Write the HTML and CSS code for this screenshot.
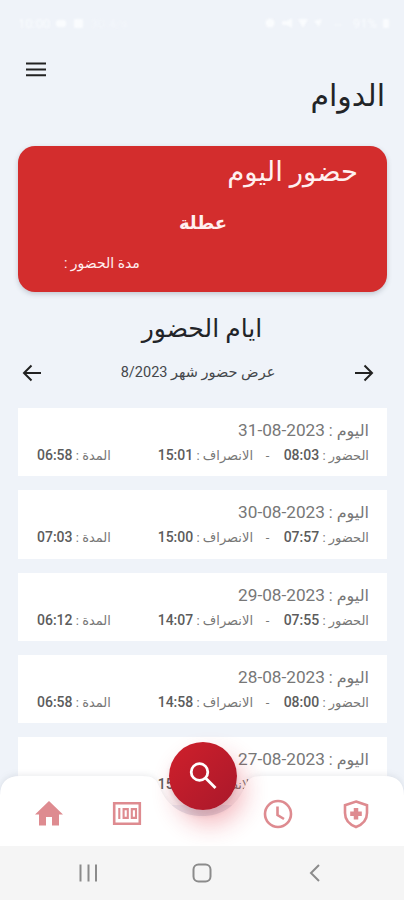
FILE: index.html
```html
<!DOCTYPE html>
<html lang="ar" dir="rtl">
<head>
    <meta charset="UTF-8">
    <meta name="viewport" content="width=device-width, initial-scale=1.0">
    <title>الدوام</title>
    <link rel="stylesheet" href="styles.css">
</head>
<body>
    <div class="app">
        <div class="status" dir="ltr">
            <div class="status-group">
                <span>10:00</span>
                <svg width="30" height="10" viewBox="0 0 30 10"><rect x="1" y="2" width="10" height="7" rx="2"/><rect x="19" y="1" width="9" height="9" rx="1"/></svg>
                <span class="dim">30.4/s</span>
            </div>
            <div class="status-group">
                <svg width="84" height="10" viewBox="0 0 84 10"><circle cx="6" cy="5" r="4.5"/><path d="M18 3h5l5-3v10l-5-3h-5zM34 1h10l-5 9zM50 3l8-2-3 8z"/><path d="M70 6h8v2h-8z" opacity=".4"/></svg>
                <span>91%</span>
                <svg width="9" height="10" viewBox="0 0 9 10"><rect x="1" y="1" width="6" height="9" rx="1"/></svg>
            </div>
        </div>

        <header class="header">
            <h1>الدوام</h1>
            <svg class="menu" width="22" height="16" viewBox="0 0 22 16"><path d="M1 2.500h20M1 8.500h20M1 14.200h20"/></svg>
        </header>

        <section class="today">
            <h2>حضور اليوم</h2>
            <strong>عطلة</strong>
            <p>مدة الحضور :</p>
        </section>

        <h2 class="days-title">ايام الحضور</h2>
        <div class="month">
            <svg width="20" height="18" viewBox="0 0 20 18"><path d="M1 9h17M10.500 1.500L18 9l-7.500 7.500"/></svg>
            <span>عرض حضور شهر 8/2023</span>
            <svg width="20" height="18" viewBox="0 0 20 18"><path d="M19 9H2M9.500 1.500L2 9l7.500 7.500"/></svg>
        </div>

        <main class="list">
            <div class="day">
                <div class="date">اليوم : <bdi dir="ltr">31-08-2023</bdi></div>
                <div class="times">
                    <span class="in">الحضور : <b>08:03</b></span><span class="dash">-</span><span class="out">الانصراف : <b>15:01</b></span><span class="total">المدة : <b>06:58</b></span>
                </div>
            </div>
            <div class="day">
                <div class="date">اليوم : <bdi dir="ltr">30-08-2023</bdi></div>
                <div class="times">
                    <span class="in">الحضور : <b>07:57</b></span><span class="dash">-</span><span class="out">الانصراف : <b>15:00</b></span><span class="total">المدة : <b>07:03</b></span>
                </div>
            </div>
            <div class="day">
                <div class="date">اليوم : <bdi dir="ltr">29-08-2023</bdi></div>
                <div class="times">
                    <span class="in">الحضور : <b>07:55</b></span><span class="dash">-</span><span class="out">الانصراف : <b>14:07</b></span><span class="total">المدة : <b>06:12</b></span>
                </div>
            </div>
            <div class="day">
                <div class="date">اليوم : <bdi dir="ltr">28-08-2023</bdi></div>
                <div class="times">
                    <span class="in">الحضور : <b>08:00</b></span><span class="dash">-</span><span class="out">الانصراف : <b>14:58</b></span><span class="total">المدة : <b>06:58</b></span>
                </div>
            </div>
            <div class="day">
                <div class="date">اليوم : <bdi dir="ltr">27-08-2023</bdi></div>
                <div class="times">
                    <span class="in"></span><span class="dash"></span><span class="out">الانصراف : <b>15:00</b></span>
                </div>
            </div>
        </main>

        <nav class="tabs" dir="ltr">
            <svg class="tabs-bg" width="404" height="70" viewBox="0 0 404 70"><path d="M0 70V20Q0 0 20 0H142C153 0 156 3 159 10C167 30 182 40 202 40S237 30 245 10C248 3 251 0 262 0H384Q404 0 404 20V70z"/></svg>
            <svg class="tab" width="30" height="30" viewBox="0 0 30 30"><path class="fill" d="M15 2L1 15.500H5V26.500h7V18h6v8.500h7V15.500h4z"/></svg>
            <svg class="tab" width="30" height="30" viewBox="0 0 30 30"><path d="M2.200 4.200h25.600v20.600H2.200z"/><path class="thin" d="M7.300 9v11M11.600 10.100h4.200v8.800h-4.200zM19.800 10.100H24v8.800h-4.200z"/></svg>
            <button class="search">
                <svg width="32" height="32" viewBox="0 0 32 32"><circle cx="12.500" cy="12" r="8.300"/><path d="M18.500 18l10 10"/></svg>
            </button>
            <svg class="tab" width="30" height="30" viewBox="0 0 30 30"><circle cx="15" cy="15" r="13"/><path d="M14.500 7.500V16l6.500 4"/></svg>
            <svg class="tab" width="30" height="30" viewBox="0 0 30 30"><path d="M15 2.500L26 6.200V14c0 7-4.500 11.500-11 14C8.500 25.500 4 21 4 14V6.200z"/><path class="cross" d="M15 9v11.500M9.200 14.700h11.600"/></svg>
        </nav>

        <footer class="system" dir="ltr">
            <svg width="20" height="20" viewBox="0 0 20 20"><path d="M2.500 1.500v17M10.500 1.500v17M18 1.500v17"/></svg>
            <svg width="20" height="20" viewBox="0 0 20 20"><rect x="1.500" y="1.500" width="17" height="17" rx="5"/></svg>
            <svg width="20" height="20" viewBox="0 0 20 20"><path d="M14 2L6 10l8 8"/></svg>
        </footer>
    </div>
</body>
</html>
```

FILE: styles.css
```css
* {
    box-sizing: border-box;
}
body {
    margin: 0;
    background: #eff3f9;
    font-family: Roboto, "DejaVu Sans", sans-serif;
    color: #222428;
}
h1, h2, p {
    margin: 0;
    font-weight: normal;
}
svg {
    flex: none;
    fill: none;
    stroke: #222;
    stroke-width: 2;
}
.app {
    position: relative;
    display: flex;
    flex-direction: column;
    width: 404px;
    height: 900px;
    overflow: hidden;
}
.status {
    display: flex;
    flex: none;
    justify-content: space-between;
    align-items: center;
    height: 46px;
    padding: 0 13px 0 18px;
    font-size: 13px;
    color: #fafcfe;
    filter: blur(1px);
}
.status svg {
    fill: #fafcfe;
    stroke: none;
}
.status-group {
    display: flex;
    align-items: center;
    gap: 5px;
}
.dim {
    opacity: .4;
}
.header {
    display: flex;
    flex: none;
    justify-content: space-between;
    height: 100px;
    padding: 15px 19px 0 25px;
}
h1 {
    margin-top: 16px;
    font-size: 30px;
    line-height: 38px;
}
.today {
    display: flex;
    flex: none;
    flex-direction: column;
    height: 146px;
    margin: 0 17px 0 18px;
    padding: 5px 29px 0 46px;
    border-radius: 17px;
    background: #d32d2d;
    box-shadow: 0 2px 5px rgba(60, 70, 90, .25);
    color: #fff0f0;
}
.today h2 {
    font-size: 27.500px;
    line-height: 42px;
}
.today strong {
    align-self: center;
    margin-top: 16px;
    padding-right: 16px;
    font-size: 18px;
    line-height: 28px;
}
.today p {
    align-self: flex-end;
    margin-top: 14px;
    font-size: 14px;
    line-height: 24px;
}
.days-title {
    flex: none;
    margin-top: 17px;
    font-size: 25px;
    line-height: 40px;
    text-align: center;
}
.month {
    display: flex;
    flex: none;
    justify-content: space-between;
    align-items: center;
    height: 46px;
    padding: 1px 30px 0 22px;
    font-size: 14.500px;
    color: #44474b;
}
.list {
    display: flex;
    flex: 1;
    flex-direction: column;
    gap: 14px;
    min-height: 0;
    margin: 13px 17px 0 18px;
    overflow: hidden;
}
.day {
    flex: none;
    height: 68.300px;
    padding: 10px 18px 0 19px;
    background: #fff;
    color: #777;
}
.date {
    font-size: 16px;
    line-height: 24px;
    white-space: nowrap;
}
.date bdi {
    font-size: 17.200px;
}
.times {
    display: flex;
    font-size: 13px;
    line-height: 25px;
    white-space: nowrap;
}
.times b {
    color: #5c5c5c;
    font-size: 14px;
    font-weight: 500;
}
.in {
    width: 87px;
}
.dash {
    width: 29px;
    text-align: center;
}
.out {
    width: 94px;
}
.total {
    margin-right: auto;
}
.tabs {
    position: absolute;
    left: 0;
    top: 776px;
    display: grid;
    grid-template-columns: 78px 78px 72px 78px 78px;
    justify-items: center;
    width: 404px;
    height: 70px;
    padding: 23px 9px 0 10px;
}
.tabs-bg {
    position: absolute;
    left: 0;
    top: 0;
    fill: #fff;
    stroke: none;
    filter: drop-shadow(0 -1px 3px rgba(70, 80, 100, .12));
}
.tab {
    position: relative;
    stroke: #de8b90;
    stroke-width: 2.600;
}
.tab .fill {
    fill: #de8b90;
    stroke: none;
}
.tab .thin {
    stroke-width: 2.100;
}
.tab .cross {
    stroke-width: 4.500;
}
.search {
    position: relative;
    display: grid;
    place-items: center;
    width: 68px;
    height: 68px;
    margin-top: -57px;
    padding: 0;
    border: 0;
    border-radius: 50%;
    background: linear-gradient(135deg, #cf202b, #a9182b);
    box-shadow: 0 5px 5px rgba(80, 70, 80, .15), 7px 14px 24px rgba(220, 30, 50, .32);
}
.search svg {
    stroke: #fff;
    stroke-width: 2.800;
}
.tab:nth-of-type(n+4), .search {
    left: 1px;
}
.system {
    display: flex;
    flex: none;
    justify-content: space-between;
    align-items: center;
    position: relative;
    height: 54px;
    padding: 0 79px 0 78px;
    background: #f5f5f5;
}
.system svg {
    stroke: #8b8b8b;
    stroke-width: 2;
}
```
